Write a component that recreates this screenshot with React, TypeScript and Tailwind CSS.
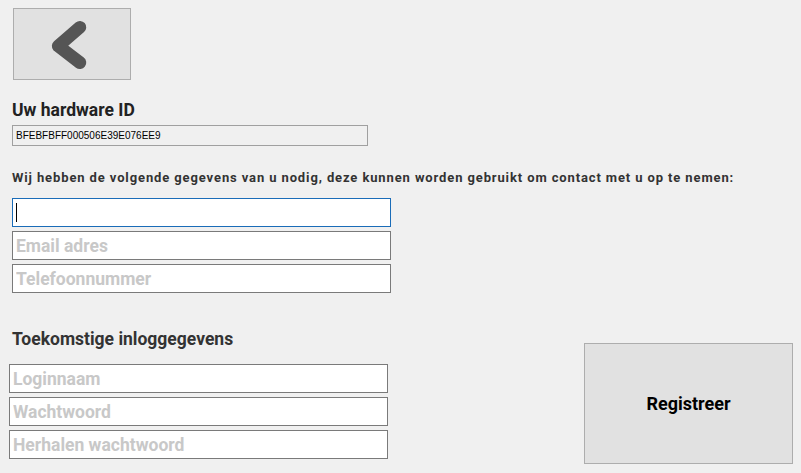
import { useState } from "react";

function TextField({ placeholder, focused }: { placeholder: string; focused?: boolean }) {
  return (
    <div className="relative w-[379px]">
      <input
        type="text"
        placeholder={placeholder}
        className={`block w-full h-[29px] bg-white border px-[3px] text-[17.5px] font-bold text-[#333] placeholder:text-[#c8c8c8] outline-none ${
          focused ? "border-[#1a6cb8]" : "border-[#7a7a7a]"
        }`}
      />
      {/* text cursor of the active field */}
      {focused && <span className="absolute left-[4px] top-[5px] w-px h-[19px] bg-black" />}
    </div>
  );
}

export default function App() {
  const [hardwareId] = useState("BFEBFBFF000506E39E076EE9");

  return (
    <div className="w-[801px] h-[473px] bg-[#f0f0f0] font-['Roboto',sans-serif] text-[#222] overflow-hidden">
      {/* back */}
      <button className="ml-[13px] mt-[8px] w-[118px] h-[72px] bg-[#e1e1e1] border border-[#adadad] flex items-center justify-center">
        <svg width="118" height="72" viewBox="13 8 118 72">
          <path
            d="M80 27 L58 46 L80 63"
            fill="none"
            stroke="#555555"
            strokeWidth="13"
            strokeLinecap="round"
            strokeLinejoin="round"
          />
        </svg>
      </button>

      <h2 className="ml-[12px] mt-[20px] text-[17.5px] leading-[20px] font-bold">Uw hardware ID</h2>
      <div className="ml-[12px] mt-[5px] w-[356px] h-[21px] border border-[#a0a0a0] bg-[#f0f0f0] px-[3px] flex items-center font-['Liberation_Sans',sans-serif] text-[10px] text-black">
        {hardwareId}
      </div>

      <p className="ml-[12px] mt-[25px] text-[13px] leading-[14px] font-bold tracking-[0.88px] text-[#333]">
        Wij hebben de volgende gegevens van u nodig, deze kunnen worden gebruikt om contact met u op te nemen:
      </p>

      <div className="ml-[12px] mt-[13px] flex flex-col gap-[4px]">
        <TextField placeholder="" focused />
        <TextField placeholder="Email adres" />
        <TextField placeholder="Telefoonnummer" />
      </div>

      <div className="mt-[36px] flex">
        <div className="ml-[9px]">
          <h2 className="ml-[3px] text-[17.5px] leading-[20px] font-bold text-[#333]">Toekomstige inloggegevens</h2>
          <div className="mt-[15px] flex flex-col gap-[4px]">
            <TextField placeholder="Loginnaam" />
            <TextField placeholder="Wachtwoord" />
            <TextField placeholder="Herhalen wachtwoord" />
          </div>
        </div>
        <button className="ml-[196px] mt-[14px] w-[209px] h-[121px] bg-[#e1e1e1] border border-[#adadad] text-[18px] font-bold text-black">
          Registreer
        </button>
      </div>
    </div>
  );
}
